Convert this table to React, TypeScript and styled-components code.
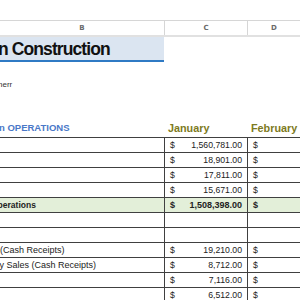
import React from "react";
import styled, { createGlobalStyle } from "styled-components";

const GlobalStyle = createGlobalStyle`
  html, body {
    margin: 0;
    padding: 0;
    background: #ffffff;
    overflow: hidden;
  }
  body {
    font-family: "Liberation Sans", Arial, sans-serif;
  }
`;

const StyledSheet = styled.div`
  width: 300px;
  height: 300px;
  overflow: hidden;
  display: flex;
  flex-direction: column;
  padding-top: 20px;
  box-sizing: border-box;
`;

const StyledRow = styled.div<{ $height: number; $fill?: string; $line?: string }>`
  display: grid;
  grid-template-columns: 164px 83px 1fr;
  height: ${(p) => p.$height}px;
  flex-shrink: 0;
  box-sizing: border-box;
  background: ${(p) => p.$fill || "transparent"};
  border-bottom: ${(p) => (p.$line ? `1px solid ${p.$line}` : "none")};
`;

const StyledColHead = styled.div<{ $divider?: boolean }>`
  display: flex;
  align-items: center;
  justify-content: center;
  font-family: "DejaVu Sans", sans-serif;
  font-size: 7px;
  font-weight: bold;
  color: #6b6b6b;
  border-top: 1px solid #d6d6d6;
  border-left: ${(p) => (p.$divider ? "1px solid #d6d6d6" : "none")};
  background: #ffffff;
`;

const StyledHeadRow = styled(StyledRow)`
  border-bottom: 2px solid #e1e1e1;
`;

const StyledTitle = styled.div`
  display: flex;
  align-items: center;
  background: #dbe5f1;
  border-bottom: 2px solid #2f7ac4;
  font-size: 17.5px;
  font-weight: bold;
  letter-spacing: -0.9px;
  color: #111111;
  white-space: nowrap;
  overflow: hidden;
`;

const StyledTitleText = styled.span`
  margin-left: -2px;
  margin-top: 1px;
`;

const StyledNote = styled.div`
  display: flex;
  align-items: center;
  font-size: 8px;
  color: #333333;
  white-space: nowrap;
  overflow: hidden;
`;

const StyledClipped = styled.span<{ $shift: number }>`
  margin-left: ${(p) => -p.$shift}px;
`;

const StyledSection = styled.div`
  display: flex;
  align-items: flex-end;
  padding-bottom: 4px;
  font-size: 9.5px;
  font-weight: bold;
  color: #4a78c8;
  white-space: nowrap;
  overflow: hidden;
`;

const StyledMonth = styled.div`
  display: flex;
  align-items: flex-end;
  padding-bottom: 3px;
  padding-left: 4px;
  font-size: 10.8px;
  font-weight: bold;
  color: #7d7a22;
  white-space: nowrap;
`;

const StyledLabel = styled.div<{ $bold?: boolean }>`
  display: flex;
  align-items: center;
  font-size: ${(p) => (p.$bold ? 8.5 : 9)}px;
  font-weight: ${(p) => (p.$bold ? "bold" : "normal")};
  color: #222222;
  white-space: nowrap;
  overflow: hidden;
`;

const StyledMoney = styled.div<{ $bold?: boolean }>`
  display: flex;
  align-items: center;
  justify-content: space-between;
  padding: 0 5px 0 5px;
  border-left: 1px solid #404040;
  font-size: ${(p) => (p.$bold ? 9 : 8.7)}px;
  font-weight: ${(p) => (p.$bold ? "bold" : "normal")};
  color: #222222;
  white-space: nowrap;
  overflow: hidden;
`;

type Line = {
  label?: string;
  shift?: number;
  jan?: string;
  bold?: boolean;
  total?: boolean;
};

const lines: Array<Line> = [
  { jan: "1,560,781.00" },
  { jan: "18,901.00" },
  { jan: "17,811.00" },
  { jan: "15,671.00" },
  { label: "Operations", shift: 9, jan: "1,508,398.00", bold: true, total: true },
  {},
  {},
  { label: "(Cash Receipts)", shift: 0, jan: "19,210.00" },
  { label: "ty Sales (Cash Receipts)", shift: 3, jan: "8,712.00" },
  { jan: "7,116.00" },
  { jan: "6,512.00" },
];

export default function App() {
  return (
    <>
      <GlobalStyle />
      <StyledSheet>
        <StyledHeadRow $height={17}>
          <StyledColHead>B</StyledColHead>
          <StyledColHead $divider>C</StyledColHead>
          <StyledColHead $divider>D</StyledColHead>
        </StyledHeadRow>

        <StyledRow $height={25}>
          <StyledTitle>
            <StyledTitleText>n Construction</StyledTitleText>
          </StyledTitle>
        </StyledRow>

        <StyledRow $height={15} />
        <StyledRow $height={15}>
          <StyledNote>
            <StyledClipped $shift={2}>herr</StyledClipped>
          </StyledNote>
        </StyledRow>
        <StyledRow $height={10} />

        <StyledRow $height={36} $line="#404040">
          <StyledSection>
            <StyledClipped $shift={1}>n OPERATIONS</StyledClipped>
          </StyledSection>
          <StyledMonth>January</StyledMonth>
          <StyledMonth>February</StyledMonth>
        </StyledRow>

        {lines.map((l, i) => (
          <StyledRow
            key={i}
            $height={15}
            $line="#404040"
            $fill={l.total ? "#e3efd9" : undefined}
          >
            <StyledLabel $bold={l.bold}>
              {l.label && <StyledClipped $shift={l.shift || 0}>{l.label}</StyledClipped>}
            </StyledLabel>
            <StyledMoney $bold={l.bold}>
              {l.jan && (
                <>
                  <span>$</span>
                  <span>{l.jan}</span>
                </>
              )}
            </StyledMoney>
            <StyledMoney $bold={l.bold}>{l.jan && <span>$</span>}</StyledMoney>
          </StyledRow>
        ))}
      </StyledSheet>
    </>
  );
}
